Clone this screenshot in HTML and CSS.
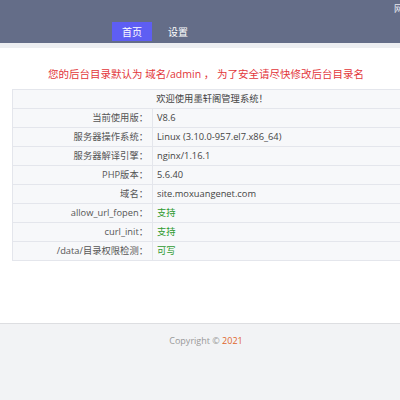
FILE: index.html
```html
<!DOCTYPE html>
<html lang="zh-CN">
<head>
<meta charset="utf-8">
<title>后台管理</title>
<link rel="stylesheet" href="styles.css">
</head>
<body>
<div class="page">
  <header class="header">
    <nav class="nav">
      <a class="tab active">首页</a>
      <a class="tab">设置</a>
    </nav>
    <div class="user">网站</div>
  </header>
  <p class="notice">您的后台目录默认为 域名/admin ， 为了安全请尽快修改后台目录名</p>
  <table class="info">
    <tr><td class="title" colspan="2">欢迎使用墨轩阁管理系统！</td></tr>
    <tr><td class="label">当前使用版：</td><td class="value">V8.6</td></tr>
    <tr><td class="label">服务器操作系统：</td><td class="value">Linux (3.10.0-957.el7.x86_64)</td></tr>
    <tr><td class="label">服务器解译引擎：</td><td class="value">nginx/1.16.1</td></tr>
    <tr><td class="label">PHP版本：</td><td class="value">5.6.40</td></tr>
    <tr><td class="label">域名：</td><td class="value">site.moxuangenet.com</td></tr>
    <tr><td class="label">allow_url_fopen：</td><td class="value ok">支持</td></tr>
    <tr><td class="label">curl_init：</td><td class="value ok">支持</td></tr>
    <tr><td class="label">/data/目录权限检测：</td><td class="value ok">可写</td></tr>
  </table>
  <footer class="footer">Copyright © <span class="year">2021</span></footer>
</div>
</body>
</html>
```

FILE: styles.css
```css
html, body {
  margin: 0;
  padding: 0;
  overflow: hidden;
  background: #ffffff;
}
body {
  font-family: "Open Sans", "Noto Sans CJK SC", sans-serif;
}
.page {
  width: 412px;
  height: 400px;
  display: flex;
  flex-direction: column;
}
.header {
  height: 43px;
  background: #646d88;
  border-bottom: 5px solid #eceef1;
  display: flex;
  align-items: flex-start;
}
.nav {
  display: flex;
  margin-top: 22px;
  margin-left: 112px;
}
.tab {
  height: 19px;
  line-height: 19px;
  font-size: 10px;
  color: #ffffff;
  font-family: "Noto Sans CJK SC", sans-serif;
  text-align: center;
}
.tab.active {
  width: 40px;
  background: #5e5ef3;
}
.tab + .tab {
  margin-left: 16px;
}
.user {
  margin-left: auto;
  margin-top: 3px;
  font-size: 9px;
  line-height: 12px;
  color: #e8e9f0;
  white-space: nowrap;
  font-family: "Noto Sans CJK SC", sans-serif;
}
.notice {
  margin: 19px 0 8px;
  text-align: center;
  font-size: 10.5px;
  line-height: 14px;
  color: #e2363a;
  white-space: nowrap;
}
.info {
  margin-left: 12px;
  width: 400px;
  border-collapse: collapse;
  background: #f7f8fa;
  font-size: 9.3px;
  color: #444;
}
.info td {
  border: 1px solid #e4e6ec;
  height: 18px;
  padding: 0 4px;
  line-height: 12px;
  white-space: nowrap;
}
.info .title {
  text-align: center;
  color: #444;
}
.info .label {
  width: 131px;
  text-align: right;
  color: #555;
}
.info .value.ok {
  color: #2e9a2e;
}
.footer {
  margin-top: 62px;
  flex: 1;
  border-top: 1px solid #dddee1;
  background: #f2f3f5;
  text-align: center;
  font-size: 9px;
  line-height: 12px;
  padding-top: 11px;
  color: #999;
}
.footer .year {
  color: #e0652b;
}
```
